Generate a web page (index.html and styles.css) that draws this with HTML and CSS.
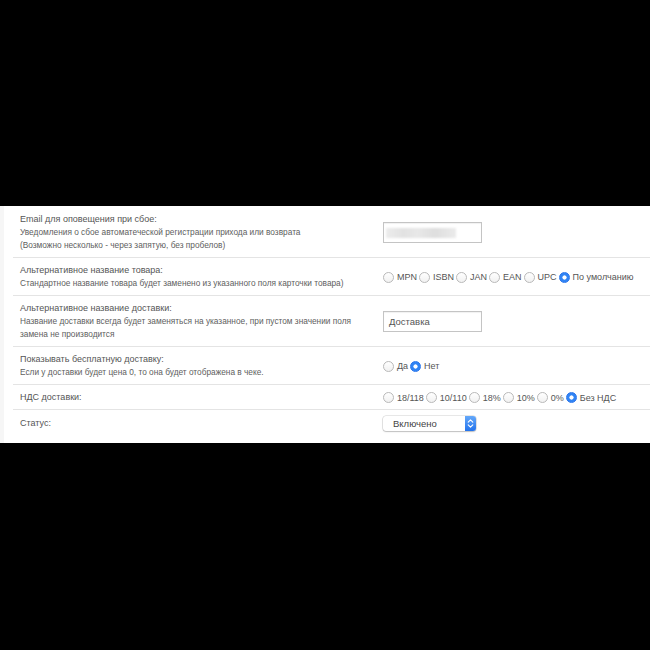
FILE: index.html
```html
<!DOCTYPE html>
<html lang="ru">
<head>
    <meta charset="UTF-8">
    <title>Настройки модуля</title>
    <link rel="stylesheet" href="styles.css">
</head>
<body>
    <div class="panel">
        <div class="row first">
            <div class="label-cell">
                <div class="label">Email для оповещения при сбое:</div>
                <div class="desc">Уведомления о сбое автоматеческой регистрации прихода или возврата</div>
                <div class="desc">(Возможно несколько - через запятую, без пробелов)</div>
            </div>
            <div class="field-cell">
                <div class="text-input"><span class="blurred"></span></div>
            </div>
        </div>

        <div class="row">
            <div class="label-cell">
                <div class="label">Альтернативное название товара:</div>
                <div class="desc">Стандартное название товара будет заменено из указанного поля карточки товара)</div>
            </div>
            <div class="field-cell">
                <label class="radio"><input type="radio" name="alt_name">MPN</label>
                <label class="radio"><input type="radio" name="alt_name">ISBN</label>
                <label class="radio"><input type="radio" name="alt_name">JAN</label>
                <label class="radio"><input type="radio" name="alt_name">EAN</label>
                <label class="radio"><input type="radio" name="alt_name">UPC</label>
                <label class="radio"><input type="radio" name="alt_name" checked>По умолчанию</label>
            </div>
        </div>

        <div class="row">
            <div class="label-cell">
                <div class="label">Альтернативное название доставки:</div>
                <div class="desc">Название доставки всегда будет заменяться на указанное, при пустом значении поля замена не производится</div>
            </div>
            <div class="field-cell">
                <div class="text-input">Доставка</div>
            </div>
        </div>

        <div class="row">
            <div class="label-cell">
                <div class="label">Показывать бесплатную доставку:</div>
                <div class="desc">Если у доставки будет цена 0, то она будет отображена в чеке.</div>
            </div>
            <div class="field-cell">
                <label class="radio"><input type="radio" name="free_ship">Да</label>
                <label class="radio"><input type="radio" name="free_ship" checked>Нет</label>
            </div>
        </div>

        <div class="row">
            <div class="label-cell">
                <div class="label">НДС доставки:</div>
            </div>
            <div class="field-cell">
                <label class="radio"><input type="radio" name="vat">18/118</label>
                <label class="radio"><input type="radio" name="vat">10/110</label>
                <label class="radio"><input type="radio" name="vat">18%</label>
                <label class="radio"><input type="radio" name="vat">10%</label>
                <label class="radio"><input type="radio" name="vat">0%</label>
                <label class="radio"><input type="radio" name="vat" checked>Без НДС</label>
            </div>
        </div>

        <div class="row last">
            <div class="label-cell">
                <div class="label">Статус:</div>
            </div>
            <div class="field-cell">
                <div class="select">
                    <span class="select-text">Включено</span>
                    <span class="select-arrows">
                        <svg width="7" height="11" viewBox="0 0 7 11">
                            <path d="M1.2 4.2 L3.5 1.9 L5.8 4.2 M1.2 6.8 L3.5 9.1 L5.8 6.8" fill="none" stroke="#fff" stroke-width="1.1" stroke-linecap="round" stroke-linejoin="round"/>
                        </svg>
                    </span>
                </div>
            </div>
        </div>
    </div>
</body>
</html>
```

FILE: styles.css
```css
* {
    margin: 0;
    padding: 0;
    box-sizing: border-box;
}

body {
    background-color: #000;
    font-family: 'Liberation Sans', Arial, sans-serif;
    color: #555;
    width: 650px;
    height: 650px;
    overflow: hidden;
}

.panel {
    margin-top: 206px;
    height: 237px;
    background-color: #fff;
    border-left: 4px solid #f6f6f6;
    padding-left: 9px;
}

.row {
    display: flex;
    align-items: center;
    border-top: 1px solid #e4e4e4;
    padding: 6px 0 5px 7px;
}

.row.first {
    border-top: none;
    padding-top: 7px;
}

.label-cell {
    width: 363px;
    flex: none;
    padding-right: 16px;
}

.label {
    font-size: 9px;
    line-height: 13px;
    color: #555;
}

.desc {
    font-size: 8.3px;
    line-height: 13px;
    color: #5e5e5e;
}

.field-cell {
    display: flex;
    align-items: center;
}

.text-input {
    width: 99px;
    height: 21px;
    border: 1px solid #c4c4c4;
    box-shadow: inset 0 1px 1px rgba(0, 0, 0, 0.06);
    font-size: 9.5px;
    color: #555;
    padding: 0 5px;
    display: flex;
    align-items: center;
}

.blurred {
    display: block;
    width: 70px;
    height: 10px;
    margin-left: -3px;
    background: linear-gradient(90deg, #ececec 0%, #e2e2e2 25%, #e8e8e8 45%, #dedede 70%, #ebebeb 100%);
    filter: blur(1px);
}

.radio {
    display: flex;
    align-items: center;
    font-size: 9px;
    color: #555;
    margin-right: 2px;
    white-space: nowrap;
}

.radio input {
    appearance: none;
    -webkit-appearance: none;
    width: 11px;
    height: 11px;
    margin-right: 3px;
    border-radius: 50%;
    border: 1px solid #b9b9b9;
    background: linear-gradient(#fff, #f1f1f1);
}

.radio input:checked {
    border-color: #2a76ec;
    background: radial-gradient(circle, #fff 0, #fff 1.8px, #3184f4 2.4px);
}

.row.last {
    padding-top: 6px;
}

.select {
    width: 93px;
    height: 15px;
    display: flex;
    align-items: center;
    border-radius: 3px;
    background-color: #fff;
    box-shadow: 0 0 0 0.5px rgba(0, 0, 0, 0.18), 0 1px 1.5px rgba(0, 0, 0, 0.18);
}

.select-text {
    flex: 1;
    font-size: 9.5px;
    color: #444;
    padding-left: 10px;
}

.select-arrows {
    width: 11px;
    height: 15px;
    border-radius: 0 3px 3px 0;
    background: linear-gradient(#64a8fa, #2373ec);
    display: flex;
    align-items: center;
    justify-content: center;
}
```
